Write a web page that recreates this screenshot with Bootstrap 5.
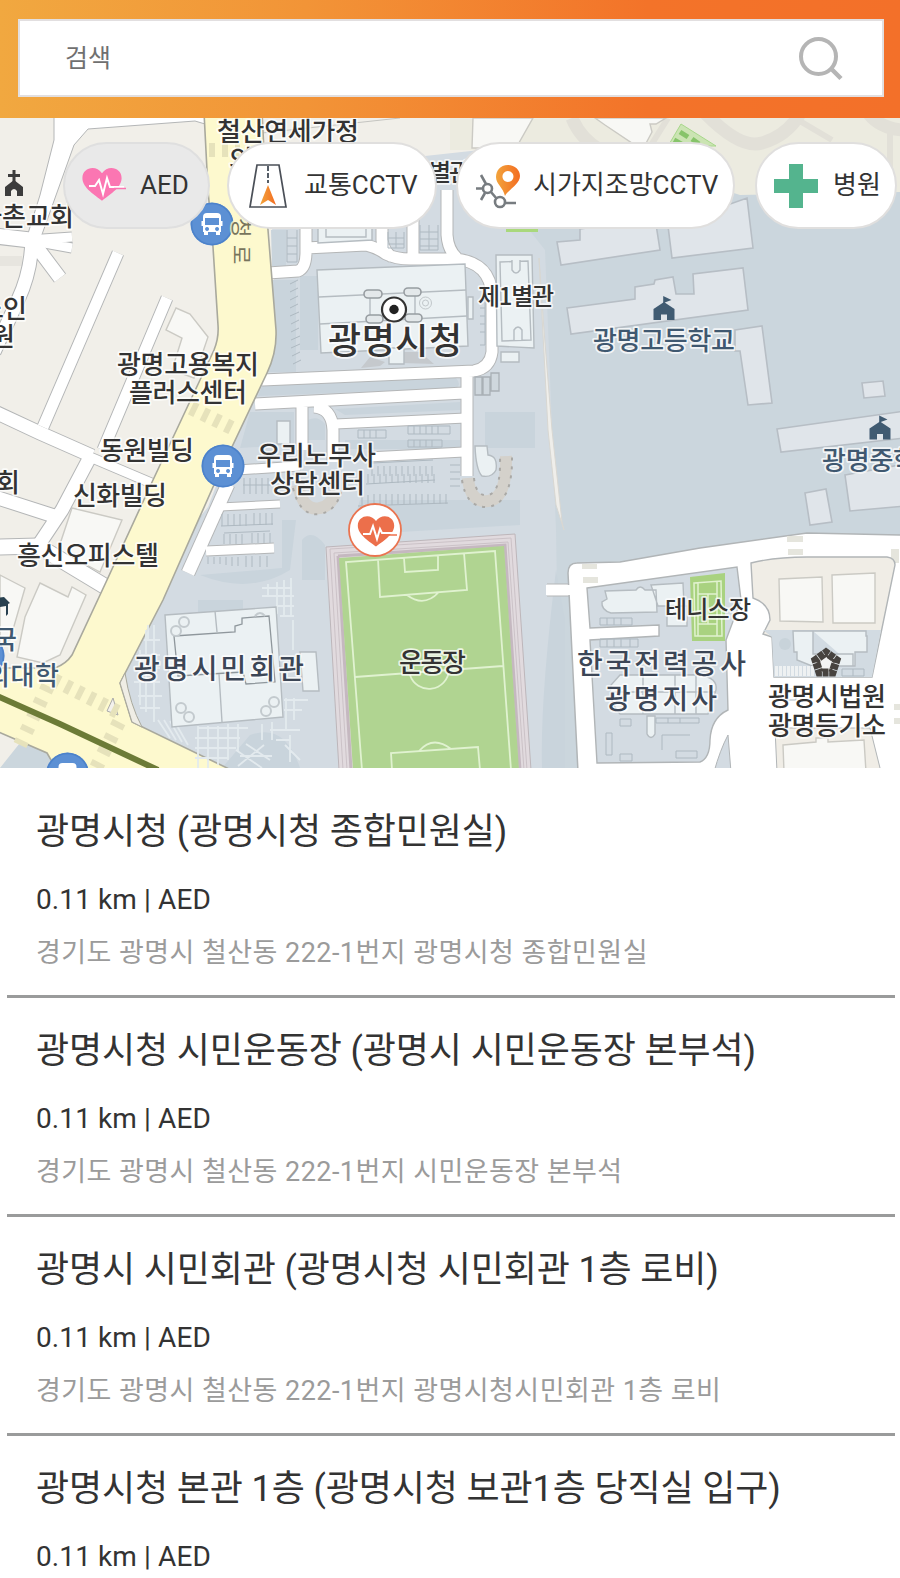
<!DOCTYPE html>
<html lang="ko">
<head>
<meta charset="utf-8">
<meta name="viewport" content="width=device-width, initial-scale=1">
<title>광명시 안전지도</title>
<link rel="stylesheet" href="https://cdn.jsdelivr.net/npm/bootstrap@5.3.0/dist/css/bootstrap.min.css">
<style>
body{font-family:Roboto,"Noto Sans CJK KR",sans-serif;color:#333;background:#fff;overflow:hidden;height:1578px}
.topbar{height:118px;padding:19px 16px 21px 18px;background:linear-gradient(90deg,#f1a840 0,#f29437 34%,#f37329 72%,#f37029)}
.searchbox{height:78px;border:2px solid #e2dfe0;padding:0 38px 0 45px}
.searchbox input,.searchbox input:focus{font-size:25px;padding:0;border:0;background:none;box-shadow:none;height:60px}
.searchbox input::placeholder{color:#707070;opacity:1}
.mapview{height:650px;overflow:hidden}
.mapview>svg{display:block}
.chips{top:24px;left:63px}
.chip{height:87px;border:2px solid #e0dfde;border-radius:44px;background:#fff;color:#333;font-size:26px;white-space:nowrap;line-height:1}
.chip span{padding-bottom:2px}
.chip.on{background:#e9e9e9;border-color:#dfdfdf}
.chip svg{flex:none}
.place{height:219px;margin:0 5px 0 7px;padding:27px 29px 0;border-bottom:3px solid #9a9b9b}
.place h2{font-size:36px;font-weight:400;line-height:52px;margin:0 0 22px;white-space:nowrap;letter-spacing:-.12px}
.place .meta{font-size:28px;line-height:40px;margin:0 0 14px;letter-spacing:.1px}
.place .addr{font-size:27px;line-height:38px;margin:0;color:#9b9b9b;white-space:nowrap;letter-spacing:.45px}
/* map layers */
.casing{--road:#b4b6b7;--edge:2px}
.surface{--road:#fff;--edge:0px}
#roadnet path,#innernet path{fill:none;stroke:var(--road);stroke-width:calc(var(--w) + var(--edge));stroke-linejoin:round}
.w7{--w:7px}.w9{--w:9px}.w11{--w:11px}.w13{--w:13px}.w15{--w:15px}
.bldg{fill:#e0e5ea;stroke:#b7bec5;stroke-width:1.6}
.hall{fill:#ebf1f3;stroke:#b5bcc1;stroke-width:1.4}
.house{fill:#f8f8f5;stroke:#cbcac4;stroke-width:1.4}
.patch{fill:#c9d4dc}
.lot{fill:none;stroke:#aeb9c1;stroke-width:1}
.zebra{fill:none;stroke:#e6e2bb;stroke-width:14}
.lab text{font-family:"Noto Sans CJK KR",sans-serif;font-weight:500;font-size:26px;fill:#333;stroke:#fff;stroke-opacity:.75;stroke-width:3.5px;stroke-linejoin:round;paint-order:stroke}
.lab .sch{fill:#3f5870}
.lab .nvy{fill:#3c4656}
.lab .street{font-size:21px;font-weight:400;fill:#77745c;stroke:#fcf8cd}
</style>
</head>
<body>
<header class="topbar">
  <div class="searchbox bg-white d-flex align-items-center justify-content-between">
    <input class="form-control rounded-0 w-50" type="text" placeholder="검색" aria-label="검색">
    <svg width="46" height="46" viewBox="0 0 46 46" fill="none" stroke="#b5b5b5" stroke-width="4"><circle cx="20.500" cy="21.500" r="17.500"/><path d="M33 33.500L43 43.500" stroke-width="4.500"/></svg>
  </div>
</header>

<section class="mapview position-relative">
<svg width="900" height="650" viewBox="0 118 900 650">
  <defs>
    <g id="bus">
      <circle r="21.500" fill="#5c90d4"/><circle r="20.500" fill="none" stroke="#4c82ca" stroke-width="1.500"/>
      <path fill="#fff" fill-rule="evenodd" d="M-5-11H5Q9-11 9-7V8H-9V-7Q-9-11-5-11ZM-7-6V1H7V-6ZM-5 3a2 2 0 1 0 .1 0ZM5 3a2 2 0 1 0 .1 0Z"/>
      <path fill="#fff" d="M-8 7h4v4h-4zM4 7h4v4h-4zM-10.500-3h2v5h-2zM8.500-3h2v5h-2z"/>
    </g>
    <path id="heart" d="M0 16C-6 11-20 3-20-7C-20-18-6-21 0-12C6-21 20-18 20-7C20 3 6 11 0 16Z"/>
    <g id="school" fill="#405b72"><path d="M-10.500 12V1L0-6L10.500 1V12H3V6.500H-3V12Z"/><path d="M-.8-4V-12L7.500-8L.8-5.500V-4Z"/></g>
    <g id="roadnet">
      <path class="w15" d="M-5 236L30 240M-5 547L38 546L106 587"/>
      <path class="w9" d="M28 240L72 237M28 240L72 248"/>
      <path class="w13" d="M30 238L60 278M32 236Q32 270 18 300L-6 352"/>
      <path class="w11" d="M118 253L43 427M167 298L103 450"/>
      <path class="w13" d="M-5 412L40 433L92 456"/>
      <path class="w9" d="M90 457L156 485"/>
      <path class="w13" d="M90 457L62 510L38 546M-5 497L54 516"/>
    </g>
    <g id="innernet">
      <path class="w11" d="M268 273L298 271Q306 268 306 252V220M306 248L366 245Q378 248 386 254Q396 259 410 259L455 259Q490 262 492 295V352Q490 368 474 371L262 380M382 215V240Q384 252 392 257M413 215V257M447 190V235Q448 250 457 258M255 404L464 393M467 372V476M302 407V450M314 407Q332 408 333 430V462"/>
      <path class="w9" d="M335 424L466 418M368 457L464 452M222 471L300 466"/>
      <path class="w13" d="M228 484L188 573"/>
      <path class="w7" d="M220 507L280 504"/>
      <path class="w9" d="M206 551L274 548"/>
      <path class="w11" d="M547 590L572 590"/>
    </g>
    <linearGradient id="og" x1="0" x2="1"><stop stop-color="#f2a43c"/><stop offset="1" stop-color="#f36c21"/></linearGradient>
  </defs>

  <!-- ground -->
  <path fill="#cbd6dd" d="M0 118H900V768H0Z"/>
  <path fill="#d3dbe2" d="M266 168H480L545 250L556 530L560 768H140L110 690L208 505L275 345Z"/>
  <path fill="#f1efe9" d="M0 118H640V148L270 176L276 330L208 507L0 768Z"/>
  <path fill="none" stroke="#c4c4c0" d="M262 133L400 118"/>
  <path fill="#d3dbe2" d="M425 156L480 150V200H425Z"/>
  <path fill="#ecebe0" d="M450 118H900V192L740 195L600 150H450Z"/>
  <path fill="none" stroke="#e2e0d8" stroke-width="13" d="M572 118Q580 138 600 150M702 110Q740 150 762 143Q790 135 803 108M865 108Q876 128 903 130"/>
  <path fill="none" stroke="#e2e0d8" stroke-width="6" d="M798 120L832 140M890 130V170M668 118L648 150"/>
  <path class="house" d="M473 118L472 148H516L533 118ZM595 118L605 125L632 143L644 147L652 132L650 124H656L666 118Z"/>
  <path fill="#cbe4b3" stroke="#a8d88b" d="M681 124L716 146H668Z"/><path stroke="#86c46a" stroke-width="5" d="M680 132l8 5M674 140l9 5M692 139l7 5"/>
  <path fill="#a9d87c" d="M506 229H538V232H506Z"/>

  <!-- shaded parcels -->
  <g class="patch">
    <path d="M272 280H296V372H268Q277 350 275 330ZM271 230H286V266H272ZM300 276H318V350H300ZM360 500H520V525L350 535ZM262 386L456 378Q462 385 456 388L258 396ZM335 409L460 402V410L345 415ZM250 412H294V445L240 448ZM308 420Q318 415 325 424V440H308ZM345 440H460V449H345ZM485 412H535V448H485Z"/>
    <path d="M200 575Q250 595 290 570L296 520H282V568ZM302 540Q312 528 325 545V580H302ZM198 600H243V612H198ZM250 735Q285 722 300 768H222ZM556 570L565 620V768H542Q540 700 556 570ZM480 160H540V210H500Z"/>
  </g>

  <!-- school buildings -->
  <path class="bldg" d="M580 229L655 218L660 250L561 265L557 242L580 240ZM668 226L747 198L753 248L672 258ZM567 308L635 299V287L654 284L655 280L673 277L676 294H694L693 274L743 268L748 310L571 334ZM735 330L762 326L772 403L748 405L740 351H735ZM862 383L883 381L885 396L864 398ZM777 429L905 411V438L781 452ZM845 475L905 464V506L850 511ZM805 493L826 489L832 522L810 525Z"/>
  <path fill="#efeeea" stroke="#d8d7d2" d="M539 258L544 330L552 430L562 522L564 530L556 505L548 430Z"/>

  <!-- left blocks -->
  <path class="house" d="M176 308L190 314L208 337L194 378L172 370L182 338L166 330ZM40 583L68 597L72 587L86 595L60 655L43 663L17 657L25 617ZM72 508L122 520L100 572L58 550ZM0 575L25 588L10 640L0 645Z"/>
  <path fill="#e7e5df" d="M0 256H22V266H0Z"/>
  <g class="casing"><use href="#roadnet"/></g>
  <path fill="#fff" stroke="#b4b6b7" d="M54 112V140L40 195L26 240H40L74 145L88 129L195 121L205 124V112Z"/>
  <g class="surface"><use href="#roadnet"/></g>

  <!-- city hall streets -->
  <g class="casing"><use href="#innernet"/></g>
  <g class="surface"><use href="#innernet"/></g>

  <!-- avenue -->
  <path fill="#fdf9ce" stroke="#a9a99d" stroke-width="1.600" d="M204 112L208 190L213 247L218 325Q219 338 214 350L200 380L153 480L107 580L72 655Q66 664 55 668L-4 668V731L47 753L58 772H235L227 768L132 722L120 683L163 600L213 487L267 373Q277 352 276 330L268 230L262 112Z"/>
  <path fill="#efede5" stroke="#a9a99d" d="M120 683L132 722L142 727Q130 705 125 673Z"/>
  <path d="M113 698L118 715L107 711Z" fill="#f3f1ec" stroke="#aaa"/>
  <g class="zebra" stroke-dasharray="6 7"><path d="M191 408L236 430M54 680L118 712M209 150H240"/></g>
  <g class="zebra" stroke-dasharray="6 9"><path d="M48 686L20 745M119 722L96 768"/></g>
  <path stroke="#6c7b37" stroke-width="6" d="M-3 696L60 724L158 770"/>

  <path class="hall" d="M318 225H372V240L318 243ZM317 270L465 264L468 346L321 353Z"/>
  <path class="hall" fill="none" d="M319 297L466 290M320 324L467 316M370 298V320M415 294V318M326 225V237H366V225M468 297h5v22h-5z"/>
  <g fill="#e3e8ea" stroke="#979da1" stroke-width="1.600"><rect x="364" y="290" width="18" height="8" rx="4"/><rect x="404" y="288" width="17" height="8" rx="4"/><rect x="366" y="315" width="17" height="8" rx="4"/><rect x="405" y="314" width="17" height="8" rx="4"/></g>
  <g fill="none" stroke="#c1c7ca"><circle cx="425.500" cy="303" r="6"/><circle cx="425.500" cy="303" r="3"/></g>
  <path fill="#c5c9cd" d="M361 368L370 357L385 362L380 366ZM402 363L404 352L420 352L434 364Z"/>
  <path class="hall" d="M389 348H404V364H389ZM496 255H532L534 348L497 346ZM500 262L528 261L531 340L502 341ZM501 352H519V362H501ZM475 446H487L488 455Q498 456 496 470Q492 478 482 476Q476 470 475 446ZM277 421H290V444H277ZM300 652H316L319 691H303Z"/>
  <path fill="#cfd7dd" stroke="#a9b0b5" stroke-width="1.300" d="M475 377H482V395H475ZM483 377H490V395H483ZM491 373H499V391H491Z"/>
  <path class="hall" fill="none" d="M512 260v10q4 6 8 0v-10M514 340v-10q4-6 8 0v10"/>
  <g fill="none" stroke="#d4d1cb" stroke-width="12"><path d="M468 478Q470 503 488 501Q507 499 506 456"/><path d="M298 485Q303 512 320 508Q332 506 336 490"/></g>
  <g fill="none" stroke="#aaa9a6" stroke-width="2" stroke-dasharray="3 6"><path d="M462 480Q466 508 488 507Q513 503 512 456M474 478Q476 497 488 495Q501 493 500 458M293 488Q300 517 320 514Q336 511 341 492"/></g>
  <g class="lot">
    <path d="M372 466V476M378 466V476M384 466V476M390 466V476M396 466V476M402 466V476M408 466V476M414 466V476M420 466V476M426 466V476M432 466V476M372 463L433 460"/>
    <path d="M368 474V483M374 474V483M380 474V483M386 474V483M392 474V483M398 474V483M404 474V483M410 474V483M416 474V483M422 474V483M428 474V483M434 474V483M366 484L435 480"/>
    <path d="M362 495V505M368 495V505M374 494V505M380 494V505M386 494V505M392 494V505M398 494V504M404 494V504M410 494V504M416 494V504M422 494V504M428 494V504M434 494V504M440 494V504M446 494V504M358 506L448 503"/>
    <path d="M358 430H386V438H358ZM364 430V438M370 430V438M376 430V438M408 426H450V434H408ZM414 426V434M420 426V434M426 426V434M432 426V434M438 426V434M408 440H442V447H408ZM414 440V447M420 440V447M426 440V447M432 440V447"/>
    <path d="M287 230V262H297V230M287 238H297M287 246H297M287 254H297M388 232V248H404V232M388 238H404M388 244H404M396 232V248M420 225V250H438V225M420 232H438M420 239H438M420 246H438M429 225V250M480 300H485V345H480M480 308H485M480 316H485M480 324H485M480 332H485"/>
    <path d="M290 284L298 280M290 292L298 288M290 300L298 296M290 308L298 304M290 316L299 312M291 324L299 320M291 332L299 328M291 340L300 336M291 348L300 344M292 356L300 352M293 364L301 360"/>
    <path d="M222 514V526M228 514V526M234 514V526M240 514V526M246 514V526M254 513V525M260 513V525M266 513V525M272 513V525M221 526L273 524M224 534V544M230 534V544M236 534V544M242 534V544M252 533V543M258 533V543M264 533V543M270 533V543M224 533L270 531M208 557V564M214 557V564M220 557V564M226 557V565M232 557V566M238 557V566M246 556V567M252 556V567M260 556V567M267 556V567M244 478V494M250 478V494M256 478V494M262 478V494M268 478V494M243 485H272M450 465H460M450 472H460M450 479H460M450 486H460"/>
  </g>

  <!-- plaza paving -->
  <g fill="none" stroke="#e3eaee" stroke-width="1.800">
    <path d="M262 588H292M262 596H294M276 606H294M280 616H294M268 584V596M277 582V614M284 580V616M291 578V616M293 620V650"/>
    <path d="M148 625V640M144 640H160M138 655H160M134 668H160M134 682H160M138 696H162M140 708H160M146 630V712M154 625V722M140 650V705"/>
    <path d="M198 728H248M195 738H240M195 748H236M195 758H228M198 726V768M208 726V768M218 726V765M228 724V760M238 724V752M158 720L170 738M164 720L176 740M170 721L182 742M176 724L188 745M284 700H308M284 710H302M270 730H300M276 740H290M286 698V730M294 698V720M262 724V740M272 722V740M236 750L262 768M246 744L270 760M264 745L238 766M240 756H272M285 745L300 760M290 735V762"/>
  </g>
  <!-- civic centre -->
  <path class="hall" d="M165 615L276 607L283 717L172 727Z"/>
  <path d="M174 636L235 632V626L242 624V618L269 616L275 682L246 684L243 672L178 676Z" stroke="#8f979c" stroke-width="1.300" fill="#ebf1f3"/>
  <path class="hall" fill="none" d="M215 611L217 632M219 674L222 722"/>
  <g fill="none" stroke="#c3cace" stroke-width="2"><circle cx="184" cy="622" r="5"/><circle cx="176" cy="631" r="5"/><circle cx="181" cy="708" r="5"/><circle cx="189" cy="717" r="5"/><circle cx="274" cy="702" r="5"/><circle cx="266" cy="711" r="5"/><path d="M255 616q5-6 10 0"/></g>

  <!-- sports ground -->
  <path fill="#e1dade" stroke="#bdb6ba" d="M326 547L515 534L531 770H339Z"/>
  <path fill="none" stroke="#cbc2c7" d="M330 549L511 538L527 770M334 553L508 542L524 770M330 549L343 770M334 553L347 770"/>
  <path fill="none" stroke="#c5b8c0" stroke-width="3" d="M338 556L505 545L520 770M338 556L351 770"/>
  <path fill="#b0d491" d="M339 558L504 546L519 770H353Z"/>
  <path fill="none" stroke="#e0f2d0" stroke-width="1.800" d="M362 770L346 562L495 551L511 770M378 559L380 597L467 590L464 553M404 558L405 572L438 570V555M407 595Q424 608 439 592M355 677L503 666M410 675A20 20 0 0 0 449 670M392 770L391 753L478 747L480 770M419 751Q433 735 451 749"/>

  <!-- south-east streets -->
  <path fill="#fff" stroke="#b1b5b7" stroke-width="1.500" d="M578 772L568 573Q568 563 577 563L620 562L700 548L807 533L905 535V772Z"/>
  <path fill="#fff" d="M546 585H573V595H546Z"/>
  <g fill="#e5e5dd"><path d="M582 564h15v5h-15zM583 577h15v6h-15zM787 536h16v6h-16zM788 549h15v6h-15zM891 549h8v14h-8zM894 704h8v6h-8zM894 718h8v6h-8z"/></g>
  <path fill="#d3dbe2" stroke="#b1b5b7" stroke-width="1.400" d="M587 588L737 567L741 600L726 640L728 710Q711 718 710 740Q710 758 700 762L597 763L590 640L659 636V625L590 628Z"/>
  <path fill="#d3dbe2" stroke="#b1b5b7" d="M714 772Q720 750 728 735L731 772Z"/>
  <path class="hall" d="M605 591L636 590Q640 584 645 590H656L657 612L611 613Q601 610 602 602L607 599ZM651 585L683 583L684 606L658 606ZM667 606H687V626H667ZM620 675H700Q718 678 716 690L708 714H620Q608 700 611 685ZM647 716H655V734Q651 741 647 734Z"/>
  <path class="hall" fill="none" d="M643 675V714M675 675V714M611 692H716M686 675H696V714"/>
  <path class="lot" d="M600 618H632V625H600ZM607 618V625M614 618V625M621 618V625M600 639H638V647H600ZM607 639V647M614 639V647M621 639V647M630 639V647M656 718H699V723H656ZM668 718V723M680 718V723M620 719H631V726H620ZM606 733H612V755H606ZM676 751H697V758H676ZM620 754H632V761H620ZM662 735H690M662 735V750"/>
  <path fill="#a9d280" d="M690 577L725 573V641H692Z"/>
  <path fill="none" stroke="#e1f2cf" stroke-width="1.500" d="M694 583L721 581L722 636H695ZM698 583V636M717 582V636M698 594H717M698 624H717M708 594V624"/>

  <path fill="#f0ede6" stroke="#b1b5b7" stroke-width="1.400" d="M751 563Q775 557 807 557H887Q895 558 895 565L872 677H774L772 637L763 634Q766 628 770 620Q770 604 753 598Z"/>
  <path fill="#d2dbe2" d="M763 630H881L872 677H774L772 637Z"/>
  <path class="house" d="M779 579L822 577L823 622L780 621ZM832 575L875 573V623H833Z"/>
  <path class="hall" d="M793 631H866V636H867V652H855V666H812L797 660V652H794ZM813 631V654H853V666"/>
  <path stroke="#eef1f2" stroke-width="10" stroke-dasharray="3 1" d="M775 671H814"/><circle cx="785" cy="644" r="6" fill="#c8d3da"/>
  <path class="lot" d="M842 669H864V676H842ZM853 669V676M781 689H796V700H781ZM866 689H870V702H866Z"/>
  <path fill="#f0ede6" stroke="#b1b5b7" d="M775 728L870 728L881 772H777Z"/><path class="house" d="M783 745L816 742V738H828V742L864 740L866 772H784Z"/>

  <!-- symbols -->
  <g fill="#3c3c3c"><path d="M5 196V187L14 180L23 187V196H17V191Q14 187 11 191V196Z"/><path d="M12.500 170H15.500V174H20V177H15.500V183H12.500V177H8V174H12.500Z"/></g>
  <use href="#school" x="664" y="308"/><use href="#school" x="880" y="427.500"/>
  <path fill="#28404f" d="M-6 598L4 597L10 603L8 604V614L6 616V606L0 607V617L-6 616Z"/>
  <circle cx="394" cy="309.500" r="12" fill="#fff" stroke="#333" stroke-width="2.200"/><circle cx="394" cy="309.500" r="4.700" fill="#222"/>
  <path d="M826 652.500L836.500 660L832.500 672.500H819.500L815.500 660Z" fill="#f3f4f3" stroke="#47433f" stroke-width="8" stroke-dasharray="5.900 .7" stroke-dashoffset="3"/>
  <use href="#bus" x="212" y="224"/><use href="#bus" x="223" y="466"/><use href="#bus" x="67.500" y="774"/><use href="#bus" x="-17" y="656"/>

  <g class="lab" transform="translate(0 1)">
    <text x="217" y="139.500" textLength="142">철산연세가정</text>
    <text x="229" y="168">의</text>
    <text x="429" y="180" style="font-size:24px" textLength="42">별관</text>
    <text x="-22" y="225" textLength="96">하촌교회</text>
    <text x="-20" y="317" textLength="47">노인</text><text x="-9" y="345">원</text>
    <text x="117" y="373" textLength="142">광명고용복지</text><text x="129" y="401" textLength="118">플러스센터</text>
    <text x="100" y="459" textLength="94">동원빌딩</text><text x="73" y="504" textLength="94">신화빌딩</text>
    <text x="-4" y="491">회</text>
    <text x="17" y="564" textLength="142">흥신오피스텔</text>
    <text x="257" y="464" textLength="119">우리노무사</text><text x="270" y="492" textLength="95">상담센터</text>
    <text x="478" y="304" textLength="76" style="font-size:24px">제1별관</text>
    <text x="328" y="353" textLength="134" style="font-size:36px">광명시청</text>
    <text class="nvy" x="134" y="678" textLength="170" style="font-size:28px">광명시민회관</text>
    <text x="399" y="671" textLength="67">운동장</text>
    <text x="665" y="617" textLength="86" style="font-size:24px">테니스장</text>
    <text class="nvy" x="577" y="673" textLength="169" style="font-size:28px">한국전력공사</text><text class="nvy" x="605" y="708" textLength="112" style="font-size:28px">광명지사</text>
    <text x="768" y="705" textLength="118">광명시법원</text><text x="768" y="734" textLength="118">광명등기소</text>
    <text class="sch" x="593" y="349" textLength="142">광명고등학교</text><text class="sch" x="822" y="469" textLength="95">광명중학</text>
    <text class="sch" x="-7" y="648">국</text><text class="sch" x="-14" y="684" textLength="73">의대학</text>
    <g transform="translate(234 217) rotate(90)"><text class="street">청</text><text class="street" x="27">로</text></g>
  </g>

  <!-- AED marker -->
  <g transform="translate(375 530)"><circle r="26" fill="#fff" stroke="#ea7450" stroke-width="1.800"/><use href="#heart" transform="translate(1 2) scale(.91)" fill="#ec6f4b"/><path fill="none" stroke="#fff" stroke-width="2" d="M-12 4H-5L-2-4L2 9L5-1L7 3H21"/><path stroke="#ec6f4b" stroke-width="1.500" d="M12 5H22"/></g>
</svg>

<nav class="chips position-absolute d-flex">
  <div class="chip on d-flex align-items-center me-3" style="width:147px;padding-left:16px">
    <svg width="46" height="40" viewBox="-21 -19 46 40"><use href="#heart" fill="#fb76b2" transform="scale(.98)"/><path fill="none" stroke="#fff" stroke-width="2" d="M-13 1H-7L-3-5L1 9L5-7L8 2H22"/><path d="M12 3.500H24" stroke="#fb76b2" stroke-width="1.500"/></svg>
    <span style="margin-left:13px">AED</span>
  </div>
  <div class="chip d-flex align-items-center" style="width:210px;margin-left:1px;padding-left:19px">
    <svg width="40" height="46" viewBox="0 0 40 46"><path d="M9 2H31L38 44H2Z" fill="#fff" stroke="#4b5058" stroke-width="1.700"/><path d="M20 3V20" stroke="#555d67" stroke-width="2" stroke-dasharray="5 2"/><path d="M20 22L28 42L20 37L12 42Z" fill="url(#og)"/></svg>
    <span style="margin-left:16px">교통CCTV</span>
  </div>
  <div class="chip d-flex align-items-center" style="width:279px;margin-left:19px;padding-left:17px">
    <svg width="46" height="46" viewBox="0 0 46 46"><g fill="none" stroke="#777c80" stroke-width="2.600"><circle cx="12.500" cy="25.500" r="4.500"/><circle cx="25" cy="39" r="5"/><path d="M1 25.500H8M6 12L11 21M6 37L10 30M16 29L21.500 35.500M30 40H41"/></g><path fill="url(#og)" fill-rule="evenodd" d="M33 2C25 2 21 8 21 14C21 21 28 24 30 33C34 26 45 21 45 13C45 7 40 2 33 2ZM33 8a5.500 5.500 0 1 1-.1 0Z"/></svg>
    <span style="margin-left:12px">시가지조망CCTV</span>
  </div>
  <div class="chip d-flex align-items-center" style="width:142px;margin-left:20px;padding-left:16px">
    <svg width="46" height="46" viewBox="0 0 46 46"><path fill="#54b48e" d="M16 1H30V16H45V30H30V45H16V30H1V16H16Z"/></svg>
    <span style="margin-left:14px">병원</span>
  </div>
</nav>
</section>

<main style="padding-top:11px">
  <article class="place"><h2>광명시청 (광명시청 종합민원실)</h2><p class="meta">0.11 km | AED</p><p class="addr">경기도 광명시 철산동 222-1번지 광명시청 종합민원실</p></article>
  <article class="place"><h2>광명시청 시민운동장 (광명시 시민운동장 본부석)</h2><p class="meta">0.11 km | AED</p><p class="addr">경기도 광명시 철산동 222-1번지 시민운동장 본부석</p></article>
  <article class="place"><h2>광명시 시민회관 (광명시청 시민회관 1층 로비)</h2><p class="meta">0.11 km | AED</p><p class="addr">경기도 광명시 철산동 222-1번지 광명시청시민회관 1층 로비</p></article>
  <article class="place border-0"><h2>광명시청 본관 1층 (광명시청 보관1층 당직실 입구)</h2><p class="meta">0.11 km | AED</p></article>
</main>
<script src="https://cdn.jsdelivr.net/npm/bootstrap@5.3.0/dist/js/bootstrap.bundle.min.js"></script>
</body>
</html>
